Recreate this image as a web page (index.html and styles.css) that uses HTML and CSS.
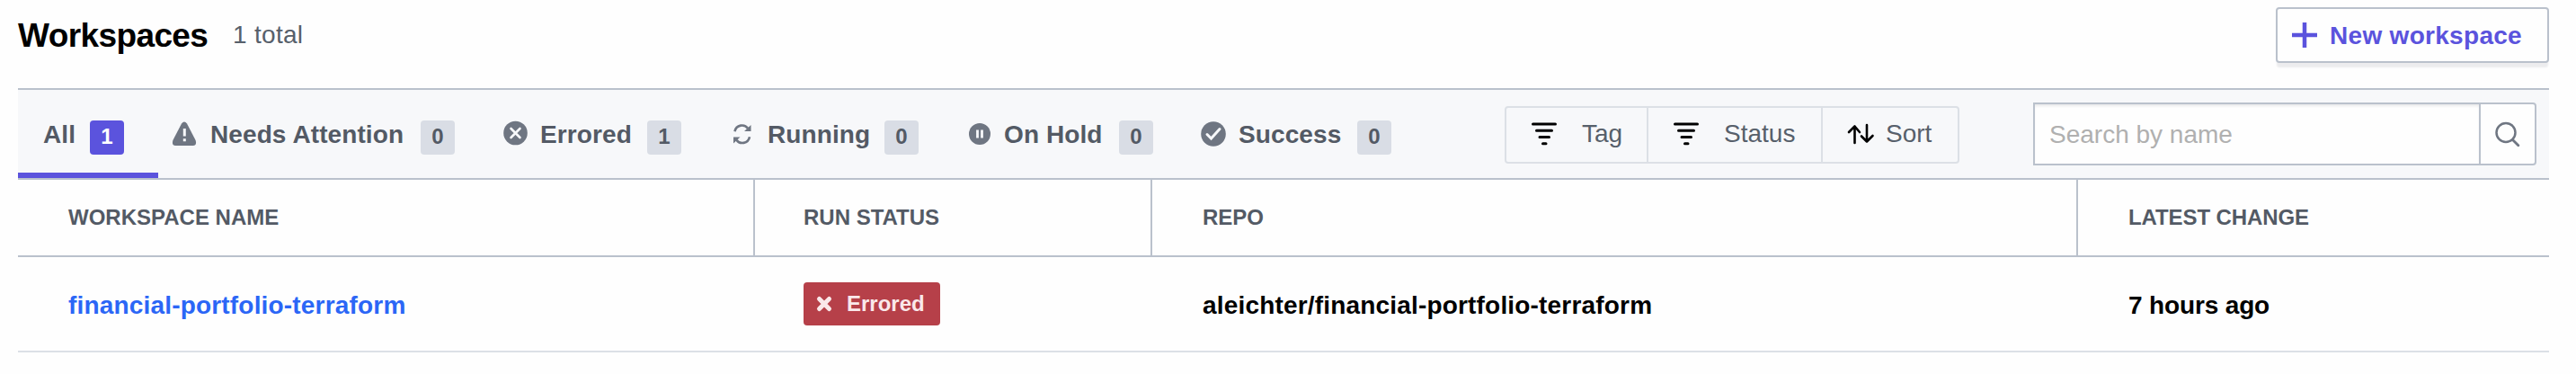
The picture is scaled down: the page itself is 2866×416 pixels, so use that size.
FILE: index.html
```html
<!DOCTYPE html>
<html lang="en">
<head>
<meta charset="utf-8">
<title>Workspaces</title>
<link rel="stylesheet" href="styles.css">
</head>
<body>
<main class="page">
  <header class="header">
    <h1 class="title">Workspaces</h1>
    <span class="total">1 total</span>
    <button class="new-btn">
      <svg width="28" height="28" viewBox="0 0 28 28"><path d="M14 0v28M0 14h28" stroke="#5b53dd" stroke-width="4.5" fill="none"/></svg>
      <span class="new-label">New workspace</span>
    </button>
  </header>

  <section class="toolbar">
    <nav class="tabs">
      <a class="tab tab-all"><span class="tab-label">All</span><span class="count">1</span></a>
      <a class="tab tab-needs">
        <svg class="tab-icon" viewBox="0 0 30 30"><path d="M12 3.600q3-4 6 0L27.600 22Q29.500 27.600 25 28H5Q.5 27.600 2.400 22Z" fill="#6f7682"/><path d="M15.300 9v8.500M15.300 20.200v3" stroke="#f7f8fa" stroke-width="3"/></svg>
        <span class="tab-label">Needs Attention</span><span class="count">0</span>
      </a>
      <a class="tab tab-errored">
        <svg class="tab-icon" viewBox="0 0 30 30"><circle cx="16.500" cy="14" r="13.300" fill="#6f7682"/><path d="M11.500 9l10 10M21.500 9l-10 10" stroke="#f7f8fa" stroke-width="2.600" stroke-linecap="round"/></svg>
        <span class="tab-label">Errored</span><span class="count">1</span>
      </a>
      <a class="tab tab-running">
        <svg class="tab-icon" viewBox="0 0 30 30"><g fill="none" stroke="#6f7682" stroke-width="2.600"><path d="M7.500 12.200C9 4.500 18.500 3.500 22 8.800M24 18.300C22.500 26 13 27 9.500 21.700"/></g><path d="M25.500 5v7h-7.500zM6 25.500v-7h7.500z" fill="#6f7682"/></svg>
        <span class="tab-label">Running</span><span class="count">0</span>
      </a>
      <a class="tab tab-hold">
        <svg class="tab-icon" viewBox="0 0 30 30"><circle cx="17" cy="15" r="12" fill="#6f7682"/><path d="M14.500 10.500v9M19.500 10.500v9" stroke="#f7f8fa" stroke-width="2.800"/></svg>
        <span class="tab-label">On Hold</span><span class="count">0</span>
      </a>
      <a class="tab tab-success">
        <svg class="tab-icon" viewBox="0 0 30 30"><circle cx="16" cy="15" r="13.800" fill="#6f7682"/><path d="M9 15.500l4.500 4.500L23 9.500" fill="none" stroke="#f7f8fa" stroke-width="3" stroke-linecap="round"/></svg>
        <span class="tab-label">Success</span><span class="count">0</span>
      </a>
    </nav>
    <div class="filters">
      <button class="filter filter-tag">
        <svg class="filter-icon" viewBox="0 0 28 28"><path d="M1.500 3h25M5.500 10.300h17M9 17.500h10.500M12.500 24.700h3.500" stroke="#000" stroke-width="3" stroke-linecap="round"/></svg>
        <span>Tag</span>
      </button>
      <button class="filter filter-status">
        <svg class="filter-icon" viewBox="0 0 28 28"><path d="M1.500 3h25M5.500 10.300h17M9 17.500h10.500M12.500 24.700h3.500" stroke="#000" stroke-width="3" stroke-linecap="round"/></svg>
        <span>Status</span>
      </button>
      <button class="filter filter-sort">
        <svg class="filter-icon" viewBox="0 0 28 28"><path d="M7.500 24V5.500M1 12l6.500-6.500L13 12M21 4v18.500M15 16.500l6 6 6.500-6.500" fill="none" stroke="#000" stroke-width="2.600" stroke-linecap="round" stroke-linejoin="round"/></svg>
        <span>Sort</span>
      </button>
    </div>
    <div class="search">
      <div class="search-field">Search by name</div>
      <button class="search-btn"><svg width="30" height="30" viewBox="0 0 30 30"><circle cx="13" cy="13.500" r="10.500" fill="none" stroke="#6f7682" stroke-width="2.500"/><path d="M20.500 21.500l6.300 6.300" stroke="#6f7682" stroke-width="2.800" stroke-linecap="round"/></svg></button>
    </div>
  </section>

  <section class="table">
    <div class="row head">
      <div class="cell"><span class="h-name">WORKSPACE NAME</span></div>
      <div class="cell"><span class="h-status">RUN STATUS</span></div>
      <div class="cell"><span>REPO</span></div>
      <div class="cell"><span class="h-change">LATEST CHANGE</span></div>
    </div>
    <div class="row item">
      <div class="cell"><a class="ws-link">financial-portfolio-terraform</a></div>
      <div class="cell"><span class="status"><svg width="18" height="18" viewBox="0 0 18 18"><path d="M3.500 3.500l11 11M14.500 3.500l-11 11" stroke="#fae8ea" stroke-width="5" stroke-linecap="round"/></svg><span>Errored</span></span></div>
      <div class="cell"><span class="repo">aleichter/financial-portfolio-terraform</span></div>
      <div class="cell"><span class="changed">7 hours ago</span></div>
    </div>
  </section>
</main>
</body>
</html>
```
FILE: styles.css
```css
* { box-sizing: border-box; }
body { margin: 0; background: #fefefe; font-family: "Liberation Sans", Arial, sans-serif; font-size: 28px; color: #000; white-space: nowrap; }
button { font: inherit; margin: 0; background: none; border: 0; text-align: left; }
svg { display: block; flex: none; overflow: visible; }
.page { margin: 0 30px 0 20px; }

.header { display: flex; align-items: flex-start; height: 98px; padding-top: 8px; }
.title { margin: 0; width: 239px; font-size: 37px; line-height: 63px; letter-spacing: -0.6px; }
.total { line-height: 61px; color: #57606b; letter-spacing: 0.3px; }
.new-btn { display: flex; align-items: center; gap: 14px; width: 304px; height: 62px; margin-left: auto; padding: 0 0 0 16px; border: 2px solid #bac1cc; border-radius: 4px; background: #fefefe; box-shadow: 0 6px 2px -1px #ececee; color: #5b53dd; font-weight: bold; }
.new-label { padding-top: 2px; letter-spacing: 0.3px; }

.toolbar { display: flex; align-items: center; height: 102px; border-top: 2px solid #bac1cc; border-bottom: 2px solid #bac1cc; background: #f7f8fa; }
.tabs { display: flex; height: 98px; width: 1654px; }
.tab { display: flex; align-items: center; font-weight: bold; color: #535a65; }
.tab-label { padding-top: 2px; letter-spacing: 0.1px; }
.tab-icon { width: 30px; height: 30px; margin-right: 14px; }
.count { display: flex; align-items: center; justify-content: center; width: 38px; height: 38px; margin-top: 8px; padding-bottom: 2px; border-radius: 4px; background: #d9dde5; font-size: 24px; }
.tab-all { width: 156px; padding: 6px 0 0 28px; border-bottom: 6px solid #5b53dd; }
.tab-all .tab-label { width: 52px; }
.tab-all .count { background: #5b53dd; color: #fff; }
.tab-needs { margin-left: 14px; }
.tab-needs .tab-label { width: 234px; }
.tab-errored { margin-left: 51px; }
.tab-errored .tab-label { width: 119px; }
.tab-running { margin-left: 52px; }
.tab-running .tab-label { width: 130px; }
.tab-hold { margin-left: 51px; }
.tab-hold .tab-label { width: 128px; }
.tab-success { margin-left: 51px; }
.tab-success .tab-label { width: 132px; }

.filters { display: flex; width: 506px; height: 64px; margin-top: 2px; border: 2px solid #dce0e6; border-radius: 4px; color: #57606b; }
.filter { display: flex; align-items: center; padding: 0 0 2px 28px; color: inherit; border-right: 2px solid #dce0e6; }
.filter-icon { width: 28px; height: 28px; margin-right: 28px; }
.filter-tag { width: 158px; }
.filter-status { width: 194px; }
.filter-sort { width: 150px; border-right: 0; }
.filter-sort .filter-icon { margin-right: 14px; }

.search { display: flex; width: 560px; height: 70px; margin-left: 82px; border: 2px solid #bac1cc; border-radius: 0 4px 4px 0; background: #fefefe; }
.search-field { width: 494px; padding: 2px 0 0 16px; line-height: 64px; color: #b0b0b0; box-shadow: inset 0 3px 3px -1px #e8e8ea; }
.search-btn { width: 62px; padding: 0 0 0 15px; border-left: 2px solid #bac1cc; }

.row { display: grid; grid-template-columns: 820px 442px 1030px 524px; }
.cell { display: flex; align-items: center; padding-left: 56px; }
.head { height: 86px; border-bottom: 2px solid #bac1cc; font-size: 24px; font-weight: bold; color: #535a65; }
.head .cell { border-right: 2px solid #bac1cc; }
.head .cell:last-child { border-right: 0; }
.h-status { margin-left: -2px; }
.h-change { letter-spacing: -0.1px; }
.item { height: 106px; border-bottom: 2px solid #dce0e6; font-weight: bold; }
.ws-link, .repo, .changed { padding-top: 4px; letter-spacing: 0.18px; font-variant-ligatures: none; }
.ws-link { color: #2b66f6; }
.changed { letter-spacing: -0.15px; }
.status { display: flex; align-items: center; gap: 16px; width: 152px; height: 48px; margin-left: -2px; padding-left: 14px; border-radius: 4px; background: #b64049; color: #fae8ea; font-size: 24px; }
```
